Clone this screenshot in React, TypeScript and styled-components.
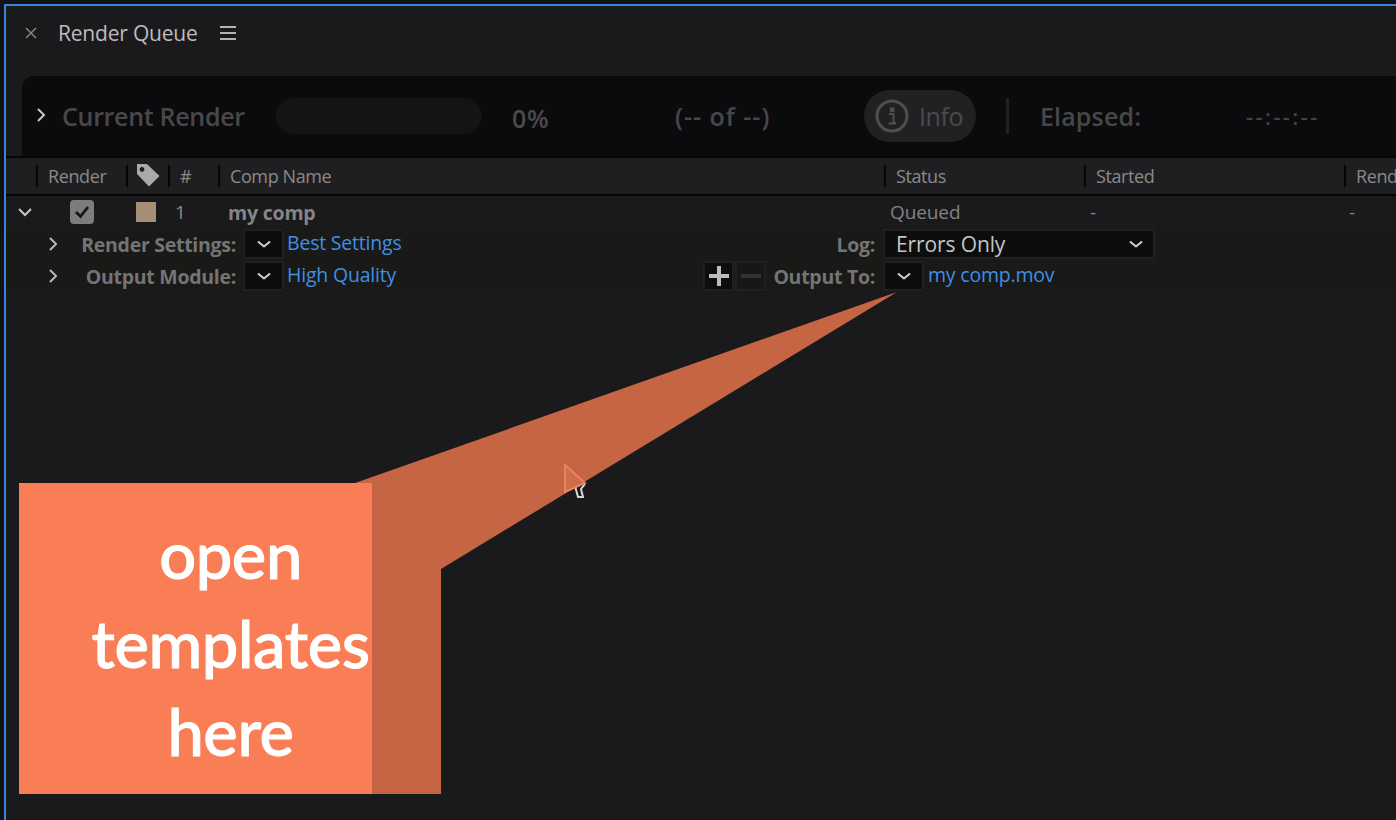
import React from "react";
import styled, { createGlobalStyle } from "styled-components";

const Global = createGlobalStyle`
  html, body { margin: 0; padding: 0; background: #121214; }
  body { font-family: "Open Sans", "Liberation Sans", sans-serif; }
  #root { width: 1396px; height: 820px; overflow: hidden; }
`;

const Screen = styled.div`
  position: relative;
  width: 1396px;
  height: 820px;
  padding: 4px 0 0 4px;
  box-sizing: border-box;
  overflow: hidden;
`;
const Panel = styled.div`
  height: 816px;
  background: #1a1a1c;
  border-top: 2px solid #3a84db;
  border-left: 2px solid #3a84db;
  display: flex;
  flex-direction: column;
`;
const TitleBar = styled.div`
  height: 70px;
  flex: none;
  display: flex;
  align-items: center;
  padding: 0 0 16px 19px;
  box-sizing: border-box;
`;
const TitleText = styled.span`
  font-size: 21px;
  line-height: 28px;
  color: #bdbdbd;
  margin-left: 21px;
  letter-spacing: -0.2px;
`;
const MenuIcon = styled.svg`
  width: 16px;
  height: 14px;
  margin-left: 22px;
  color: #b4b4b4;
`;
const CloseIcon = styled.svg`
  width: 12px;
  height: 12px;
  color: #8b8b8b;
`;
const RenderBar = styled.div`
  height: 80px;
  flex: none;
  margin-left: 16px;
  background: #0b0b0d;
  border-top-left-radius: 12px;
  display: flex;
  align-items: center;
  position: relative;
`;
const BarChevron = styled.svg`
  width: 10px;
  height: 16px;
  margin-left: 14px;
  margin-top: -2px;
  color: #c8c8c8;
`;
const BarTitle = styled.span`
  font-size: 25px;
  font-weight: 600;
  color: #48484a;
  margin-left: 16px;
  letter-spacing: -0.3px;
  white-space: nowrap;
  width: 214px;
`;
const Progress = styled.div`
  width: 206px;
  height: 36px;
  border-radius: 18px;
  background: #141412;
  margin-top: -1px;
  flex: none;
`;
const Percent = styled.span`
  font-size: 25px;
  font-weight: 600;
  color: #4a4a4c;
  margin-left: 30px;
  margin-top: 4px;
  width: 163px;
  letter-spacing: 0.6px;
  flex: none;
`;
const Count = styled.span`
  font-size: 25px;
  font-weight: 600;
  color: #47474a;
  width: 189px;
  flex: none;
  letter-spacing: 1px;
  white-space: nowrap;
  margin-top: -1px;
`;
const InfoPill = styled.div`
  width: 112px;
  height: 52px;
  border-radius: 26px;
  background: #212123;
  flex: none;
  display: flex;
  align-items: center;
  padding-left: 11px;
  box-sizing: border-box;
  gap: 10px;
  color: #4b4b4d;
  font-size: 25px;
  letter-spacing: -0.45px;
`;
const Rule = styled.div`
  width: 3px;
  height: 36px;
  background: #222224;
  margin-left: 30px;
  flex: none;
`;
const Elapsed = styled.span`
  font-size: 25px;
  font-weight: 600;
  color: #47474a;
  margin-left: 31px;
  width: 206px;
  flex: none;
  letter-spacing: 0.15px;
`;
const Time = styled.span`
  font-size: 22px;
  font-weight: 600;
  color: #434345;
  letter-spacing: 2.4px;
  white-space: nowrap;
`;
const HeaderRow = styled.div`
  height: 36px;
  flex: none;
  background: #1f1f21;
  border-top: 2px solid #050505;
  border-bottom: 2px solid #050505;
  display: grid;
  grid-template-columns: 30px 90px 42px 50px 666px 200px 260px 1fr;
  align-items: center;
`;
const HeaderCell = styled.div`
  height: 22px;
  display: flex;
  align-items: center;
  box-sizing: border-box;
  padding-left: 10px;
  border-left: 2px solid #060606;
  font-size: 18px;
  color: #8a8a8a;
  white-space: nowrap;
  letter-spacing: -0.4px;
`;
const TagIcon = styled.svg`
  width: 26px;
  height: 26px;
  margin-left: -3px;
  margin-top: -3px;
  color: #a9a9a9;
  flex: none;
`;
const CompRow = styled.div`
  height: 32px;
  flex: none;
  display: grid;
  grid-template-columns: 31px 90px 43px 49px 666px 200px 259px 1fr;
  align-items: center;
  font-size: 19px;
  color: #828282;
`;
const RowChevron = styled.svg`
  width: 16px;
  height: 10px;
  margin-left: 11px;
  color: #c6c6c6;
`;
const CheckCell = styled.div`
  padding-left: 33px;
  display: flex;
`;
const CheckBox = styled.div`
  width: 24px;
  height: 24px;
  border-radius: 4px;
  background: #7d7d7d;
  display: flex;
  align-items: center;
  justify-content: center;
  color: #151515;
`;
const SwatchCell = styled.div`
  padding-left: 9px;
  display: flex;
`;
const Swatch = styled.div`
  width: 20px;
  height: 20px;
  background: #a48f75;
`;
const Num = styled.span`
  padding-left: 5px;
  color: #8b8b8b;
  font-size: 19px;
`;
const CompName = styled.span`
  padding-left: 9px;
  font-weight: 700;
  font-size: 19.5px;
  letter-spacing: -0.2px;
  color: #858585;
`;
const ValueCell = styled.span`
  padding-left: 5px;
  letter-spacing: -0.1px;
`;
const SettingRow = styled.div`
  height: 32px;
  flex: none;
  display: grid;
  grid-template-columns: 230px 48px 419px 63px 117px 1fr;
  align-items: center;
  background: #191917;
`;
const SettingLabelCell = styled.div`
  display: flex;
  align-items: center;
  position: relative;
  justify-content: flex-end;
`;
const SideChevron = styled.svg`
  position: absolute;
  left: 42px;
  top: 5px;
  width: 10px;
  height: 16px;
  color: #b6b6b6;
`;
const Label = styled.span<{ $pad?: number }>`
  font-size: 19.5px;
  font-weight: 700;
  color: #747474;
  letter-spacing: -0.28px;
  white-space: nowrap;
  text-align: right;
  padding-right: ${(p) => p.$pad ?? 0}px;
`;
const Drop = styled.div<{ $wide?: boolean }>`
  width: ${(p) => (p.$wide ? "272px" : "41px")};
  height: 30px;
  box-sizing: border-box;
  background: #0d0d0d;
  border: 2px solid #202020;
  display: flex;
  align-items: center;
  justify-content: ${(p) => (p.$wide ? "space-between" : "center")};
  padding: ${(p) => (p.$wide ? "0 9px 0 11px" : "0")};
  justify-self: ${(p) => (p.$wide ? "start" : "end")};
  color: #d2d2d2;
`;
const DropText = styled.span`
  font-size: 21px;
  color: #c5c5c5;
  letter-spacing: -0.12px;
  white-space: nowrap;
`;
const DropChevron = styled.svg`
  width: 16px;
  height: 10px;
`;
const Link = styled.span<{ $pad?: number }>`
  font-size: 19.5px;
  color: #3f8fe6;
  padding-left: ${(p) => p.$pad ?? 3}px;
  white-space: nowrap;
  letter-spacing: -0.2px;
  margin-top: -3px;
`;
const ButtonPair = styled.div`
  display: flex;
  gap: 1px;
`;
const SquareButton = styled.div<{ $dim?: boolean }>`
  width: 31px;
  height: 30px;
  box-sizing: border-box;
  border: 2px solid #202020;
  background: ${(p) => (p.$dim ? "#171717" : "#0d0d0d")};
  display: flex;
  align-items: center;
  justify-content: center;
  color: ${(p) => (p.$dim ? "#333" : "#bcbcbc")};
`;
const ToCell = styled.div`
  display: flex;
  align-items: center;
`;
const Wedge = styled.svg`
  position: absolute;
  left: 0;
  top: 0;
  width: 1396px;
  height: 820px;
`;
const Callout = styled.div`
  position: absolute;
  left: 19px;
  top: 483px;
  width: 353px;
  height: 311px;
  background: #f97d55;
  color: #fff;
  font-family: "Lato", "Open Sans", sans-serif;
  font-weight: 500;
  font-size: 65px;
  line-height: 88.5px;
  -webkit-text-stroke: 1px #fff;
  box-sizing: border-box;
  padding: 27px 0 0 70px;
  white-space: nowrap;
  letter-spacing: -0.4px;
`;
const Line = styled.div`
  display: flex;
  justify-content: center;
  width: 283px;
`;

const Down = ({ w = 2 }: { w?: number }) => (
  <DropChevron viewBox="0 0 16 10" fill="none" stroke="currentColor" strokeWidth={w}>
    <path d="M2 2.5 L8 7.5 L14 2.5" />
  </DropChevron>
);
const Right = () => (
  <path d="M2 2 L8 8 L2 14" fill="none" stroke="currentColor" strokeWidth={2} />
);

export default function App() {
  return (
    <Screen>
      <Global />
      <Panel>
        <TitleBar>
          <CloseIcon viewBox="0 0 12 12" stroke="currentColor" strokeWidth={1.4}>
            <path d="M1 1 L11 11 M11 1 L1 11" />
          </CloseIcon>
          <TitleText>Render Queue</TitleText>
          <MenuIcon viewBox="0 0 16 14" stroke="currentColor" strokeWidth={2}>
            <path d="M0 1 H16 M0 7 H16 M0 13 H16" />
          </MenuIcon>
        </TitleBar>
        <RenderBar>
          <BarChevron viewBox="0 0 10 16"><Right /></BarChevron>
          <BarTitle>Current Render</BarTitle>
          <Progress />
          <Percent>0%</Percent>
          <Count>(-- of --)</Count>
          <InfoPill>
            <svg width="34" height="34" viewBox="0 0 34 34" fill="none">
              <circle cx="17" cy="17" r="15" stroke="#4f4f51" strokeWidth="3" />
              <path d="M14 15 H18.5 V24 H21 M13.5 24.5 H21 M16 9.5 H18.5 V12 H16 Z" stroke="#4f4f51" strokeWidth="2" />
            </svg>
            <span>Info</span>
          </InfoPill>
          <Rule />
          <Elapsed>Elapsed:</Elapsed>
          <Time>--:--:--</Time>
        </RenderBar>
        <HeaderRow>
          <span />
          <HeaderCell>Render</HeaderCell>
          <HeaderCell>
            <TagIcon viewBox="0 0 26 26" fill="currentColor">
              <path fillRule="evenodd" d="M2 2 H12 L24.5 14 L14 24.5 L2 12 Z M7 5 A2.4 2.4 0 1 0 7.01 5 Z" />
            </TagIcon>
          </HeaderCell>
          <HeaderCell>#</HeaderCell>
          <HeaderCell>Comp Name</HeaderCell>
          <HeaderCell>Status</HeaderCell>
          <HeaderCell>Started</HeaderCell>
          <HeaderCell>Rend</HeaderCell>
        </HeaderRow>
        <CompRow>
          <RowChevron viewBox="0 0 16 10" fill="none" stroke="currentColor" strokeWidth={2}>
            <path d="M2 2 L8 8 L14 2" />
          </RowChevron>
          <CheckCell>
            <CheckBox>
              <svg width="16" height="14" viewBox="0 0 16 14" fill="none" stroke="currentColor" strokeWidth="2.8">
                <path d="M2 7 L6.5 11.5 L14 2" />
              </svg>
            </CheckBox>
          </CheckCell>
          <SwatchCell><Swatch /></SwatchCell>
          <Num>1</Num>
          <CompName>my comp</CompName>
          <ValueCell>Queued</ValueCell>
          <ValueCell>-</ValueCell>
          <ValueCell>-</ValueCell>
        </CompRow>
        <SettingRow>
          <SettingLabelCell>
            <SideChevron viewBox="0 0 10 16"><Right /></SideChevron>
            <Label>Render Settings:</Label>
          </SettingLabelCell>
          <Drop><Down /></Drop>
          <Link>Best Settings</Link>
          <span />
          <Label $pad={8}>Log:</Label>
          <Drop $wide>
            <DropText>Errors Only</DropText>
            <Down />
          </Drop>
        </SettingRow>
        <SettingRow>
          <SettingLabelCell>
            <SideChevron viewBox="0 0 10 16"><Right /></SideChevron>
            <Label>Output Module:</Label>
          </SettingLabelCell>
          <Drop><Down /></Drop>
          <Link>High Quality</Link>
          <ButtonPair>
            <SquareButton>
              <svg width="20" height="20" viewBox="0 0 20 20" stroke="currentColor" strokeWidth="4">
                <path d="M10 0 V20 M0 10 H20" />
              </svg>
            </SquareButton>
            <SquareButton $dim>
              <svg width="20" height="20" viewBox="0 0 20 20" stroke="currentColor" strokeWidth="4">
                <path d="M0 10 H20" />
              </svg>
            </SquareButton>
          </ButtonPair>
          <Label $pad={8}>Output To:</Label>
          <ToCell>
            <Drop><Down /></Drop>
            <Link $pad={4}>my comp.mov</Link>
          </ToCell>
        </SettingRow>
      </Panel>
      <Wedge viewBox="0 0 1396 820">
        <polygon points="355,483 897,292 441,569 441,794 372,794 372,483" fill="#c66543" />
        <path d="M575 486 L578 497 L583 497 L581 489 L585 484" fill="#1a1a1c" stroke="#d8d8d8" strokeWidth="2" />
        <path d="M565 465 L565 492 L585 483 Z" fill="#cf6d4a" stroke="#e8845e" strokeWidth="2" />
      </Wedge>
      <Callout>
        <Line>open</Line>
        <Line>templates</Line>
        <Line>here</Line>
      </Callout>
    </Screen>
  );
}
